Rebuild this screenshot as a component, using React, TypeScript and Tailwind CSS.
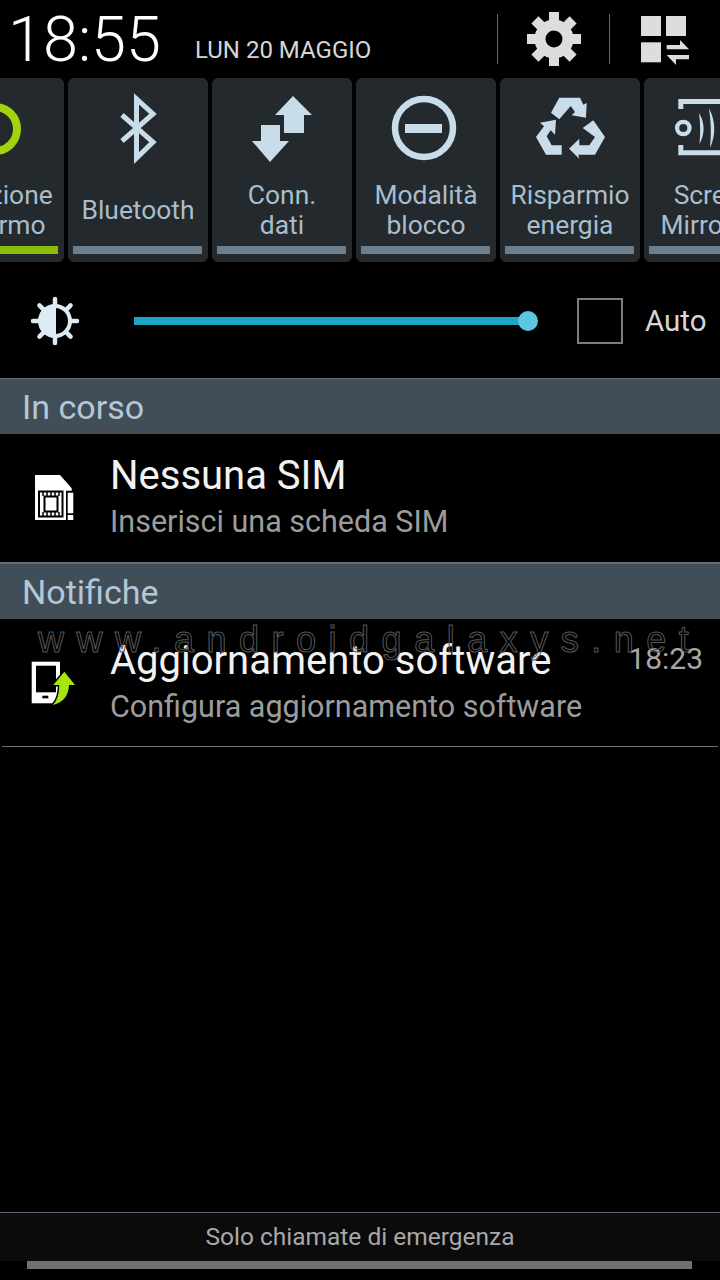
import React from "react";

const ICON = "#c9dcea";

const RotationIcon = () => (
  <svg viewBox="0 0 140 92" className="w-[140px] h-[92px]">
    <circle cx="71" cy="51" r="22" fill="none" stroke="#a4d20f" strokeWidth="8" />
  </svg>
);

const BluetoothIcon = () => (
  <svg viewBox="0 0 140 92" className="w-[140px] h-[92px]">
    <path d="M54 37 L85 64 L68.500 80 V21 L85 36 L54 63" fill="none" stroke={ICON} strokeWidth="5" />
  </svg>
);

const DataIcon = () => (
  <svg viewBox="0 0 140 92" className="w-[140px] h-[92px]">
    <path
      d="M81 18 L100 37 H92 V55 H72 V37 H63 Z M68 47 V63 H77 L58 84 L40 63 H49 V47 Z"
      fill={ICON}
    />
  </svg>
);

const BlockIcon = () => (
  <svg viewBox="0 0 140 92" className="w-[140px] h-[92px]">
    <circle cx="68" cy="50" r="29" fill="none" stroke={ICON} strokeWidth="6.500" />
    <rect x="49" y="46" width="37" height="9" fill={ICON} />
  </svg>
);

const RecycleIcon = () => (
  <svg viewBox="0 0 140 92" className="w-[140px] h-[92px]">
    <path
      fill={ICON}
      d="M51 34.700 L59.300 19.700 H80 L83.300 26.700 L86.700 25 L86 39.700 L71.700 37.300 L75 34 L70.700 28 L59.300 41.300 Z
         M56 41.700 L40 44.700 L44 48.300 L36 59 L46 76.700 H61.700 V67.300 H51.700 L46.700 58.300 L50.700 52.300 L55 56.700 Z
         M82.700 50 L93.300 42.300 L105 59 L95 76.700 H78.300 L79.300 80.700 L69 70.700 L79.300 60.700 V67.300 H89.300 L95 59 Z"
    />
  </svg>
);

const MirrorIcon = () => (
  <svg viewBox="0 0 140 92" className="w-[140px] h-[92px]">
    <path d="M36.800 31 V23.500 H90" fill="none" stroke={ICON} strokeWidth="5" />
    <path d="M36.800 67 V74.800 H90" fill="none" stroke={ICON} strokeWidth="5" />
    <circle cx="39.300" cy="50" r="6.200" fill="none" stroke={ICON} strokeWidth="4.300" />
    <path d="M55 35 Q64 50 55.500 66 Q57 50 55 35 Z" fill={ICON} />
    <path d="M65 30 Q75 50 66 70 Q68 50 65 30 Z" fill={ICON} />
  </svg>
);

const GearIcon = () => {
  const teeth = [0, 45, 90, 135, 180, 225, 270, 315];
  return (
    <svg viewBox="0 0 56 56" className="w-[56px] h-[56px]">
      {teeth.map((deg) => (
        <rect key={deg} x="23" y="1" width="10" height="12" fill="#dddddd" transform={`rotate(${deg} 28 28)`} />
      ))}
      <circle cx="28" cy="28" r="14" fill="none" stroke="#dddddd" strokeWidth="11" />
    </svg>
  );
};

const GridIcon = () => (
  <svg viewBox="0 0 50 50" className="w-[50px] h-[50px] overflow-visible">
    <rect x="0" y="2" width="20" height="20" fill="#dddddd" />
    <rect x="25" y="2" width="20" height="20" fill="#dddddd" />
    <rect x="0" y="28.300" width="20" height="20" fill="#dddddd" />
    <path d="M25.700 31 H39 V26 L48 35.300 H25.700 Z M25.700 41 H48 V45.300 H35 V51 Z" fill="#dddddd" />
  </svg>
);

const BrightnessIcon = () => {
  const rays = [0, 45, 90, 135, 180, 225, 270, 315];
  return (
    <svg viewBox="0 0 50 50" className="w-[50px] h-[50px]">
      {rays.map((deg) => (
        <line
          key={deg}
          x1="25"
          y1="3"
          x2="25"
          y2="11"
          stroke="#dcebf3"
          strokeWidth="4.500"
          strokeLinecap="round"
          transform={`rotate(${deg} 25 25)`}
        />
      ))}
      <circle cx="25" cy="25" r="15" fill="#000000" stroke="#dcebf3" strokeWidth="4" />
      <path d="M26 9 A16 16 0 0 0 26 41 Z" fill="#dcebf3" />
    </svg>
  );
};

const SimIcon = () => {
  const ticks = [9, 13, 17, 21, 25];
  return (
    <svg viewBox="0 0 40 46" className="w-[40px] h-[46px]">
      <path d="M1 0 H26 L37.700 13.300 V15.700 H32 V45 H1 Z" fill="#ffffff" />
      <rect x="5" y="16.500" width="23.500" height="25" fill="none" stroke="#000000" strokeWidth="2" />
      <rect x="10.500" y="21.500" width="13" height="15" fill="none" stroke="#000000" strokeWidth="2" />
      {ticks.map((x) => (
        <React.Fragment key={x}>
          <line x1={x} y1="17" x2={x} y2="21" stroke="#000000" strokeWidth="1.500" />
          <line x1={x} y1="37" x2={x} y2="41" stroke="#000000" strokeWidth="1.500" />
        </React.Fragment>
      ))}
      <rect x="33.700" y="17.700" width="5.600" height="20.600" fill="#ffffff" />
      <rect x="33.700" y="40" width="5.600" height="5" fill="#ffffff" />
    </svg>
  );
};

const UpdateIcon = () => (
  <svg viewBox="0 0 48 46" className="w-[48px] h-[46px]">
    <rect x="1.700" y="0.700" width="28.300" height="41.600" fill="#ffffff" />
    <rect x="6" y="4.700" width="20" height="26.600" fill="#000000" />
    <rect x="12.300" y="34.700" width="6" height="2.600" fill="#000000" />
    <path
      d="M34.300 10.700 L45 24 H39 Q38.500 40 23 44 Q29.300 37 29.300 24 H23.300 Z"
      fill="#a6e60c"
      stroke="#000000"
      strokeWidth="3"
      paintOrder="stroke"
    />
  </svg>
);

type TileProps = {
  lines: string[];
  icon: React.ReactNode;
  active?: boolean;
};

const Tile = ({ lines, icon, active }: TileProps) => (
  <div className="w-[140px] h-[184px] shrink-0 rounded-[6px] bg-[#23292d] flex flex-col">
    <div className="h-[92px]">{icon}</div>
    <div className="mt-[10px] h-[60px] flex flex-col items-center justify-center text-[26.400px] leading-[30px] text-[#a9bdcc]">
      {lines.map((line) => (
        <span key={line} className="whitespace-nowrap">
          {line}
        </span>
      ))}
    </div>
    <div className={`mt-[6px] ml-[5px] mr-[6px] h-[8px] ${active ? "bg-[#8dbb0a]" : "bg-[#6c7f8c]"}`} />
  </div>
);

const App = () => {
  return (
    <div className="relative w-[720px] h-[1280px] overflow-hidden bg-black flex flex-col font-['Roboto',sans-serif]">
      <div className="h-[78px] flex items-center shrink-0">
        <div className="ml-[8px] w-[187px] text-[63px] font-light leading-none text-white">18:55</div>
        <div className="w-[302px] pt-[22px] text-[24px] leading-none text-[#d6d6d6]">LUN 20 MAGGIO</div>
        <div className="w-px h-[50px] bg-[#5a6a70]" />
        <div className="w-[111px] flex justify-center">
          <GearIcon />
        </div>
        <div className="w-px h-[50px] bg-[#5a6a70]" />
        <div className="ml-[31px]">
          <GridIcon />
        </div>
      </div>

      <div className="-ml-[76px] flex gap-[4px] shrink-0">
        <Tile lines={["Rotazione", "schermo"]} icon={<RotationIcon />} active />
        <Tile lines={["Bluetooth"]} icon={<BluetoothIcon />} />
        <Tile lines={["Conn.", "dati"]} icon={<DataIcon />} />
        <Tile lines={["Modalità", "blocco"]} icon={<BlockIcon />} />
        <Tile lines={["Risparmio", "energia"]} icon={<RecycleIcon />} />
        <Tile lines={["Screen", "Mirroring"]} icon={<MirrorIcon />} />
      </div>

      <div className="h-[116px] pt-[2px] flex items-center shrink-0">
        <div className="ml-[30px]">
          <BrightnessIcon />
        </div>
        <div className="ml-[54px] w-[404px] flex items-center">
          <div className="flex-1 h-[8px] bg-[#1ba6c6]" />
          <div className="-ml-[11px] w-[20px] h-[20px] rounded-full bg-[#5cc6df]" />
        </div>
        <div className="ml-[39px] w-[46px] h-[46px] border-2 border-[#7d7d7d]" />
        <div className="ml-[22px] text-[29.500px] text-[#d6d6d6]">Auto</div>
      </div>

      <div className="h-[56px] bg-[#414e58] border-t border-[#5d6870] pl-[22px] pt-[2px] flex items-center text-[34px] text-[#b3c7d9] shrink-0">
        In corso
      </div>
      <div className="h-[128px] flex shrink-0">
        <div className="w-[110px] pl-[34px] pt-[41px]">
          <SimIcon />
        </div>
        <div className="flex flex-col">
          <div className="mt-[19px] text-[40px] leading-[45px] text-[#f2f2f2]">Nessuna SIM</div>
          <div className="mt-[4px] text-[30.500px] leading-[40px] text-[#9c9c9c]">Inserisci una scheda SIM</div>
        </div>
      </div>

      <div className="h-[57px] bg-[#414e58] border-t-2 border-[#626d75] pl-[22px] pt-[2px] flex items-center text-[34px] text-[#b3c7d9] shrink-0">
        Notifiche
      </div>
      <div className="h-[127px] flex shrink-0">
        <div className="w-[110px] pl-[30px] pt-[42px]">
          <UpdateIcon />
        </div>
        <div className="flex flex-col">
          <div className="mt-[19px] text-[40px] leading-[45px] text-[#f2f2f2]">Aggiornamento software</div>
          <div className="mt-[4px] text-[30.500px] leading-[40px] text-[#9c9c9c]">Configura aggiornamento software</div>
        </div>
        <div className="ml-auto mr-[17px] mt-[22px] text-[30px] leading-[36px] text-[#a8a8a8]">18:23</div>
      </div>
      <div className="mx-[2px] h-px bg-[#6a6e7e] shrink-0" />

      <div className="flex-1" />

      <div className="h-[49px] bg-[#0b0b0b] border-t border-[#5f6675] flex items-center justify-center text-[24.500px] text-[#a8a8a8] shrink-0">
        Solo chiamate di emergenza
      </div>
      <div className="h-[8px] ml-[27px] w-[665px] bg-[#707070] shrink-0" />
      <div className="h-[11px] shrink-0" />

      <div className="absolute left-[38px] top-[616px] whitespace-nowrap text-[36px] leading-[48px] tracking-[12.500px] text-transparent font-['Liberation_Sans',sans-serif] [-webkit-text-stroke:1px_#565656]">
        www.androidgalaxys.net
      </div>
    </div>
  );
};

export default App;
